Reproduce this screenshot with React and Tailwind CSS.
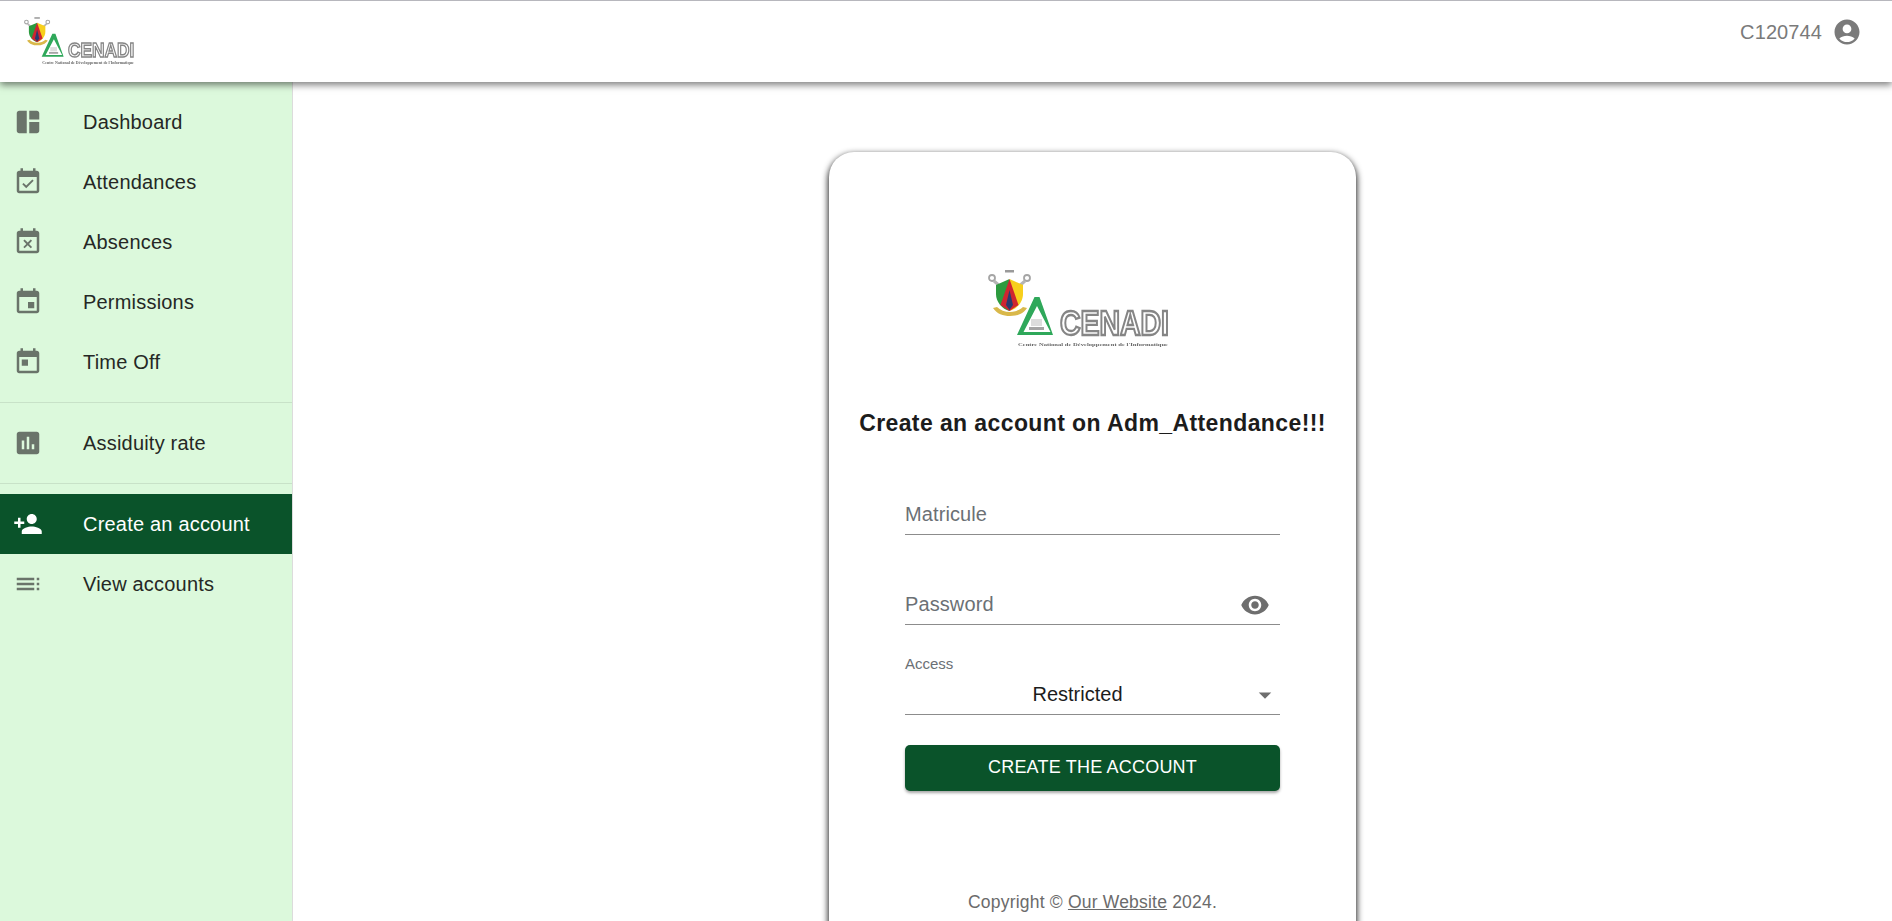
import React from 'react';

const paths = {
  dashboard: 'M11 21H5c-1.1 0-2-.9-2-2V5c0-1.1.9-2 2-2h6v18zm2 0h6c1.1 0 2-.9 2-2v-7h-8v9zm8-11V5c0-1.1-.9-2-2-2h-6v7h8z',
  eventAvailable: 'M16.53 11.06L15.47 10l-4.88 4.88-2.12-2.12-1.06 1.06L10.59 17l5.94-5.94zM19 3h-1V1h-2v2H8V1H6v2H5c-1.11 0-1.99.9-1.99 2L3 19c0 1.1.89 2 2 2h14c1.1 0 2-.9 2-2V5c0-1.1-.9-2-2-2zm0 16H5V8h14v11z',
  eventBusy: 'M9.31 17l2.44-2.44L14.19 17l1.06-1.06-2.44-2.44 2.44-2.44L14.19 10l-2.44 2.44L9.31 10l-1.06 1.06 2.44 2.44-2.44 2.44L9.31 17zM19 3h-1V1h-2v2H8V1H6v2H5c-1.11 0-1.99.9-1.99 2L3 19c0 1.1.89 2 2 2h14c1.1 0 2-.9 2-2V5c0-1.1-.9-2-2-2zm0 16H5V8h14v11z',
  event: 'M17 12h-5v5h5v-5zM16 1v2H8V1H6v2H5c-1.11 0-1.99.9-1.99 2L3 19c0 1.1.89 2 2 2h14c1.1 0 2-.9 2-2V5c0-1.1-.9-2-2-2h-1V1h-2zm3 18H5V8h14v11z',
  today: 'M19 3h-1V1h-2v2H8V1H6v2H5c-1.11 0-1.99.9-1.99 2L3 19c0 1.1.89 2 2 2h14c1.1 0 2-.9 2-2V5c0-1.1-.9-2-2-2zm0 16H5V8h14v11zM7 10h5v5H7z',
  assessment: 'M19 3H5c-1.1 0-2 .9-2 2v14c0 1.1.9 2 2 2h14c1.1 0 2-.9 2-2V5c0-1.1-.9-2-2-2zM9 17H7v-7h2v7zm4 0h-2V7h2v10zm4 0h-2v-4h2v4z',
  personAdd: 'M15 12c2.21 0 4-1.79 4-4s-1.79-4-4-4-4 1.79-4 4 1.79 4 4 4zm-9-2V7H4v3H1v2h3v3h2v-3h3v-2H6zm9 4c-2.67 0-8 1.34-8 4v2h16v-2c0-2.66-5.33-4-8-4z',
  toc: 'M3 9h14V7H3v2zm0 4h14v-2H3v2zm0 4h14v-2H3v2zm16 0h2v-2h-2v2zm0-10v2h2V7h-2zm0 6h2v-2h-2v2z',
  account: 'M12 2C6.48 2 2 6.48 2 12s4.48 10 10 10 10-4.48 10-10S17.52 2 12 2zm0 4c1.93 0 3.5 1.57 3.5 3.5S13.93 13 12 13s-3.5-1.57-3.5-3.5S10.07 6 12 6zm0 14c-2.03 0-4.43-.82-6.14-2.88C7.55 15.8 9.68 15 12 15s4.45.8 6.14 2.12C16.43 19.18 14.03 20 12 20z',
  visibility: 'M12 4.5C7 4.5 2.73 7.61 1 12c1.73 4.39 6 7.5 11 7.5s9.27-3.11 11-7.5c-1.73-4.39-6-7.5-11-7.5zM12 17c-2.76 0-5-2.24-5-5s2.24-5 5-5 5 2.24 5 5-2.24 5-5 5zm0-8c-1.66 0-3 1.34-3 3s1.34 3 3 3 3-1.34 3-3-1.34-3-3-3z',
  arrowDrop: 'M7 10l5 5 5-5z',
};

function Icon({ name, className }) {
  return (
    <svg viewBox="0 0 24 24" fill="currentColor" className={`w-[30px] h-[30px] shrink-0 ${className || ''}`}>
      <path d={paths[name]} />
    </svg>
  );
}

// CENADI logo with the crest, drawn at 182x78 and scaled by width
function Logo({ className }) {
  return (
    <svg viewBox="0 0 182 78" className={`overflow-visible blur-[0.4px] ${className}`}>
      {/* crest */}
      <circle cx="4" cy="8" r="3" fill="none" stroke="#a5a5a5" strokeWidth="1.8" />
      <circle cx="39" cy="8" r="3" fill="none" stroke="#a5a5a5" strokeWidth="1.8" />
      <path d="M6 11l7 6M37 11l-7 6" stroke="#b5b5b5" strokeWidth="3" />
      <rect x="17" y="0" width="9" height="2.5" fill="#9a9a9a" />
      <path d="M8 15L21.5 9v32C14 39 8 32 8 24z" fill="#2c9a3e" />
      <path d="M35 15L21.5 9v32C29 39 35 32 35 24z" fill="#f7cf1c" />
      <path d="M21.5 9l9 26-9 6-9-6z" fill="#cf2530" />
      <path d="M21.5 20l3.5 15-3.5 5-3.5-5z" fill="#2b3a70" />
      <path d="M5 38c4 6 10 8 17 8s13-2 17-8l-4-1c-3 3-8 5-13 5s-10-2-13-5z" fill="#d9b84a" />
      {/* triangle */}
      <path d="M46.5 27h5L65 65H29zM49 36L35.5 62h27z" fill="#2fa85a" fillRule="evenodd" />
      <rect x="43" y="49" width="11" height="7" fill="#dddddd" />
      <rect x="41" y="57" width="15" height="3" fill="#a5a5a5" />
      {/* wordmark */}
      <text transform="translate(72 65) scale(1 1.22)" textLength="109" lengthAdjust="spacingAndGlyphs" fontFamily="'Liberation Sans', sans-serif" fontWeight="700" fontSize="28" fill="#ffffff" stroke="#858585" strokeWidth="1.9">CENADI</text>
      <text x="30" y="76" textLength="150" lengthAdjust="spacingAndGlyphs" fontFamily="'Liberation Serif', serif" fontWeight="700" fontSize="5" fill="#666666">Centre National de Développement de l'Informatique</text>
    </svg>
  );
}

function NavItem({ icon, label, active }) {
  return (
    <div className={`h-[60px] flex items-center pl-[13px] ${active ? 'bg-[#0a532a] text-white' : 'text-[#252825]'}`}>
      <Icon name={icon} className={active ? 'text-white' : 'text-[#6a746a]'} />
      <span className="ml-10 text-[20px] tracking-[0.2px]">{label}</span>
    </div>
  );
}

export default function App() {
  return (
    <div className="h-screen overflow-hidden flex flex-col bg-white font-['Liberation_Sans',Arial,sans-serif]">
      <header className="relative z-10 h-[82px] shrink-0 bg-white border-t border-[#b7b7bd] shadow-[0_3px_7px_rgba(0,0,0,0.5)] flex justify-between pl-6 pr-[30px]">
        <Logo className="w-[111px] h-[48px] mt-4" />
        <div className="flex items-center gap-[10px] h-[62px] text-[20px] tracking-[0.1px] text-[#7a7a7a]">
          <span>C120744</span>
          <Icon name="account" />
        </div>
      </header>

      <div className="flex flex-1 min-h-0">
        <aside className="w-[293px] shrink-0 bg-[#dcf9dc] border-r border-[#dcdcdc]">
          <div className="py-[10px] border-b border-[#c8e2c8]">
            <NavItem icon="dashboard" label="Dashboard" />
            <NavItem icon="eventAvailable" label="Attendances" />
            <NavItem icon="eventBusy" label="Absences" />
            <NavItem icon="event" label="Permissions" />
            <NavItem icon="today" label="Time Off" />
          </div>
          <div className="py-[10px] border-b border-[#c8e2c8]">
            <NavItem icon="assessment" label="Assiduity rate" />
          </div>
          <div className="py-[10px]">
            <NavItem icon="personAdd" label="Create an account" active />
            <NavItem icon="toc" label="View accounts" />
          </div>
        </aside>

        <main className="flex-1 min-w-0 flex justify-center items-start">
          <div className="w-[527px] mt-[70px] shrink-0 pb-10 bg-white rounded-[25px] shadow-[0_3px_6px_1px_rgba(0,0,0,0.85)]">
            <Logo className="w-[182px] h-[78px] mt-[118px] ml-[159px]" />
            <h1 className="mt-[60px] text-center text-[23px] leading-[30px] font-bold tracking-[0.4px] text-[#1c1c1c]">Create an account on Adm_Attendance!!!</h1>

            <form className="w-[375px] mx-auto mt-[56px]">
              <div className="h-[41px] border-b border-[#8c8c8c] text-[20px] leading-[40px] tracking-[0.1px] text-[#6b7075]">Matricule</div>
              <div className="h-[41px] mt-[49px] border-b border-[#8c8c8c] flex items-center justify-between pr-[10px] text-[20px] tracking-[0.1px] text-[#6b7075]">
                <span>Password</span>
                <Icon name="visibility" className="text-[#6e6e6e] mt-[2px]" />
              </div>
              <div className="mt-[30px] h-[19px] text-[15px] leading-[18px] text-[#6b7075]">Access</div>
              <div className="relative h-[41px] border-b border-[#8c8c8c] text-[20px] leading-[40px] text-[#1c1c1c] text-center pr-[30px]">
                Restricted
                <Icon name="arrowDrop" className="absolute right-0 top-[6px] text-[#6e6e6e]" />
              </div>
              <button type="button" className="w-full h-[46px] mt-[30px] pb-[2px] rounded-[5px] bg-[#0a532a] text-white text-[18px] tracking-[0.2px] shadow-[0_2px_3px_rgba(0,0,0,0.35)]">CREATE THE ACCOUNT</button>
            </form>

            <p className="mt-[99px] text-center text-[17.5px] leading-6 tracking-[0.2px] text-[#6b6b6b]">
              Copyright © <span className="underline">Our Website</span> 2024.
            </p>
          </div>
        </main>
      </div>
    </div>
  );
}
